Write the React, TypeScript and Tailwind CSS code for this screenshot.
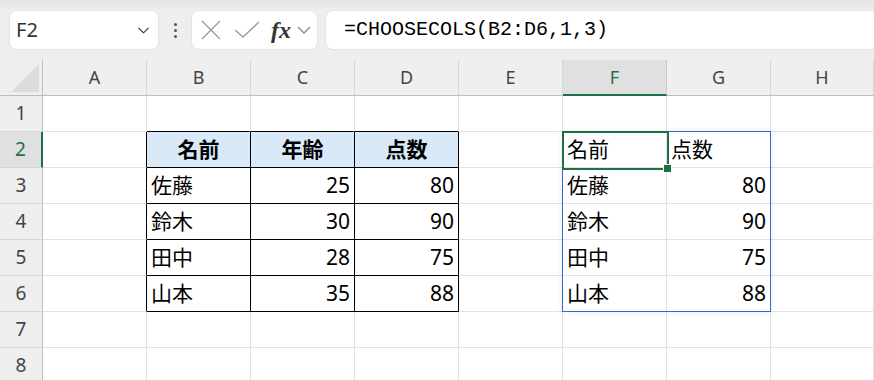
import { ChevronDown } from 'lucide-react';

const COLS = ['A', 'B', 'C', 'D', 'E', 'F', 'G', 'H'];
const ROWS = [1, 2, 3, 4, 5, 6, 7, 8];

type Cell = { text: string; align?: 'left' | 'right' | 'center'; bold?: boolean };

const DATA: Record<string, Cell> = {
  B2: { text: '名前', align: 'center', bold: true },
  C2: { text: '年齢', align: 'center', bold: true },
  D2: { text: '点数', align: 'center', bold: true },
  B3: { text: '佐藤' }, C3: { text: '25', align: 'right' }, D3: { text: '80', align: 'right' },
  B4: { text: '鈴木' }, C4: { text: '30', align: 'right' }, D4: { text: '90', align: 'right' },
  B5: { text: '田中' }, C5: { text: '28', align: 'right' }, D5: { text: '75', align: 'right' },
  B6: { text: '山本' }, C6: { text: '35', align: 'right' }, D6: { text: '88', align: 'right' },
  F2: { text: '名前' }, G2: { text: '点数' },
  F3: { text: '佐藤' }, G3: { text: '80', align: 'right' },
  F4: { text: '鈴木' }, G4: { text: '90', align: 'right' },
  F5: { text: '田中' }, G5: { text: '75', align: 'right' },
  F6: { text: '山本' }, G6: { text: '88', align: 'right' },
};

const inTable = (col: string) => col === 'B' || col === 'C' || col === 'D';

function GridCell({ col, row }: { col: string; row: number }) {
  const cell = DATA[col + row];
  // table B2:D6 has black borders; A's right edge and row 1's bottom form its outer edge
  const blackRight = row >= 2 && row <= 6 && (col === 'A' || inTable(col));
  const blackBottom = row >= 1 && row <= 6 && inTable(col);
  const headerFill = row === 2 && inTable(col);

  return (
    <div
      className={`h-9 border-r border-b flex items-center px-1 text-[21px] text-black overflow-hidden whitespace-nowrap ${
        blackRight ? 'border-r-black' : 'border-r-[#e1e1e1]'
      } ${blackBottom ? 'border-b-black' : 'border-b-[#e1e1e1]'} ${headerFill ? 'bg-[#dae9f8]' : 'bg-white'} ${
        cell?.align === 'right' ? 'justify-end' : cell?.align === 'center' ? 'justify-center' : 'justify-start'
      } ${cell?.bold ? 'font-bold' : 'font-normal'}`}
    >
      {cell?.text}
    </div>
  );
}

function FormulaBar() {
  return (
    <div className="h-[60px] bg-[linear-gradient(#e2e4e5,#eceeef_10px)] flex items-start pt-[10px] pl-[9px] gap-0">
      <div className="w-[150px] h-10 bg-white rounded-lg border border-[#e3e3e3] flex items-center pl-[6px] pr-[5px] justify-between">
        <span className="text-[20px] text-[#333]">F2</span>
        <ChevronDown size={19} strokeWidth={1.6} className="text-[#444]" />
      </div>
      <div className="w-[32px] h-10 flex flex-col items-center justify-center gap-[3px]">
        <span className="w-[3px] h-[3px] rounded-full bg-[#555]" />
        <span className="w-[3px] h-[3px] rounded-full bg-[#555]" />
        <span className="w-[3px] h-[3px] rounded-full bg-[#555]" />
      </div>
      <div className="w-[127px] h-10 bg-white rounded-lg border border-[#e3e3e3] flex items-center pl-[8px]">
        <svg width="22" height="22" viewBox="0 0 22 22" className="text-[#9c9c9c]">
          <path d="M2 2 L20 20 M20 2 L2 20" stroke="currentColor" strokeWidth="1.4" fill="none" />
        </svg>
        <svg width="26" height="20" viewBox="0 0 26 20" className="ml-[12px] text-[#9c9c9c]">
          <path d="M1 10 L9 17 L25 2" stroke="currentColor" strokeWidth="1.4" fill="none" />
        </svg>
        <span className="ml-[11px] text-[24px] italic font-bold leading-none text-[#333] font-['Liberation_Serif',serif]">
          fx
        </span>
        <svg width="14" height="10" viewBox="0 0 14 10" className="ml-[6px] text-[#8a8a8a]">
          <path d="M1 2 L7 8 L13 2" stroke="currentColor" strokeWidth="1.3" fill="none" />
        </svg>
      </div>
      <div className="ml-[7px] flex-1 h-10 bg-white rounded-l-lg border border-r-0 border-[#e3e3e3] flex items-center pl-[18px]">
        <span className="text-[20px] text-black font-['Liberation_Mono',monospace]">=CHOOSECOLS(B2:D6,1,3)</span>
      </div>
    </div>
  );
}

export default function App() {
  return (
    <div className="w-[874px] h-[380px] overflow-hidden bg-white font-['Noto_Sans','Noto_Sans_CJK_JP',sans-serif]">
      <FormulaBar />
      <div className="relative grid grid-cols-[43px_repeat(7,104px)_1fr]">
        {/* corner */}
        <div className="h-9 bg-[#efefef] border-r border-b border-r-[#bdbdbd] border-b-[#bdbdbd] flex items-end justify-end pr-[3px] pb-[3px]">
          <svg width="28" height="28" viewBox="0 0 28 28">
            <path d="M28 0 L28 28 L0 28 Z" fill="#dcdcdc" />
          </svg>
        </div>
        {COLS.map((c) =>
          c === 'F' ? (
            <div
              key={c}
              className="h-9 bg-[#e0e0e0] border-r border-r-[#c8c8c8] border-b-2 border-b-[#1e7145] flex items-center justify-center text-[18px] text-[#1e7145]"
            >
              {c}
            </div>
          ) : (
            <div
              key={c}
              className="h-9 bg-[#efefef] border-r border-r-[#d6d6d6] border-b border-b-[#bdbdbd] flex items-center justify-center text-[18px] text-[#444]"
            >
              {c}
            </div>
          )
        )}
        {ROWS.map((r) => (
          <div key={r} className="contents">
            {r === 2 ? (
              <div className="h-9 bg-[#e0e0e0] border-r-2 border-r-[#1e7145] border-b border-b-[#d6d6d6] flex items-center justify-center text-[19px] text-[#1e7145]">
                {r}
              </div>
            ) : (
              <div className="h-9 bg-[#efefef] border-r border-r-[#bdbdbd] border-b border-b-[#d6d6d6] flex items-center justify-center text-[19px] text-[#444]">
                {r}
              </div>
            )}
            {COLS.map((c) => (
              <GridCell key={c + r} col={c} row={r} />
            ))}
          </div>
        ))}

        {/* spill range F2:G6 */}
        <div className="absolute left-[562px] top-[71px] w-[209px] h-[181px] border border-[#2b6cd4] shadow-[0_0_6px_rgba(0,0,0,0.08)] pointer-events-none" />
        {/* active cell F2 */}
        <div className="absolute left-[562px] top-[71px] w-[107px] h-[39px] border-2 border-[#1e7145] pointer-events-none" />
        <div className="absolute left-[664px] top-[105px] w-[7px] h-[7px] bg-[#1e7145] outline outline-1 outline-white pointer-events-none" />
      </div>
    </div>
  );
}
